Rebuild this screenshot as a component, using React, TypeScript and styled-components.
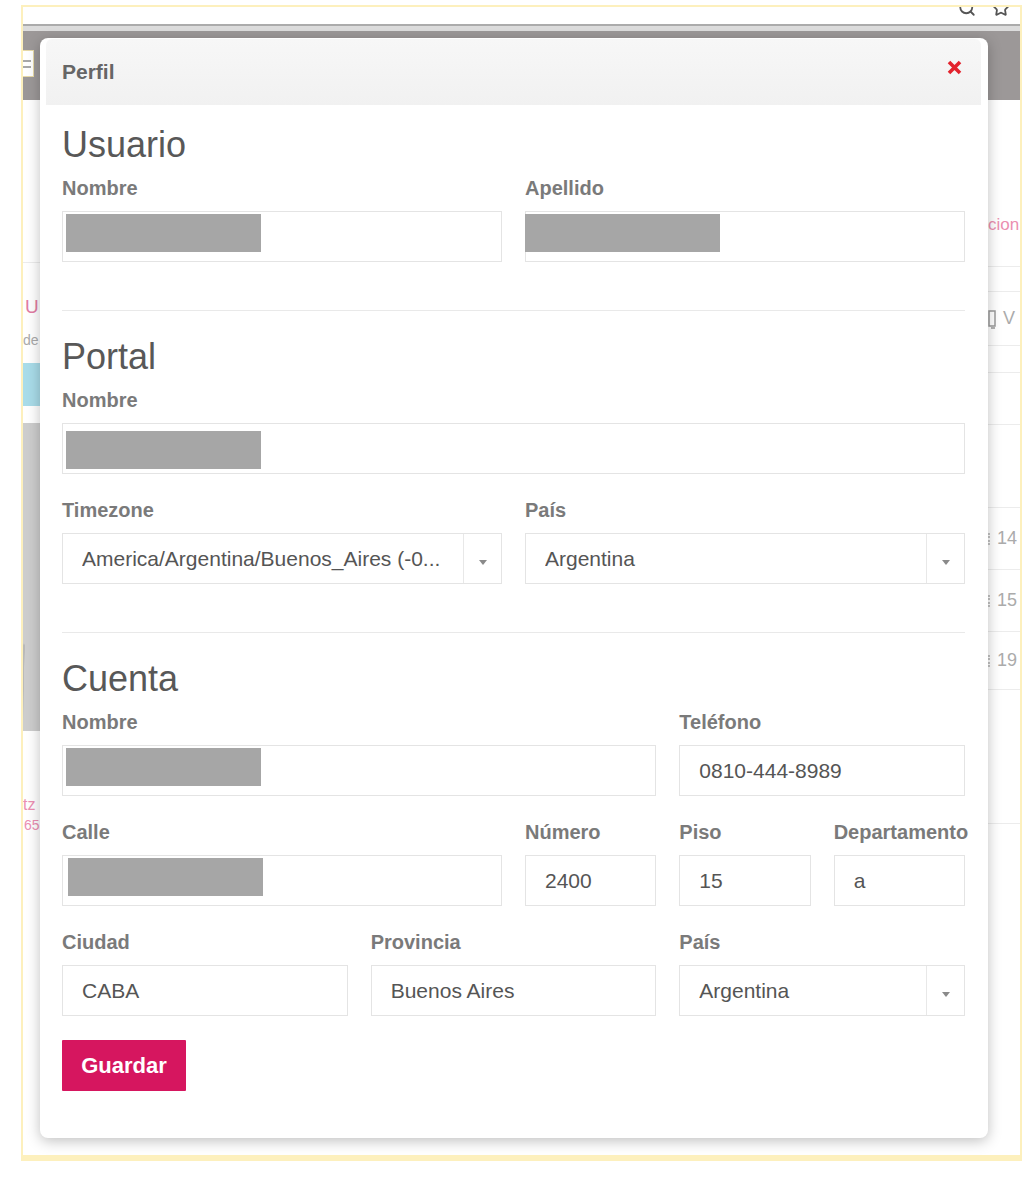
import React from "react";
import styled, { createGlobalStyle } from "styled-components";
import { Search, Star } from "lucide-react";

const GlobalStyle = createGlobalStyle`
  html, body {
    margin: 0;
    padding: 0;
    background: #fff;
  }
  body {
    font-family: "Liberation Sans", Arial, sans-serif;
  }
  * {
    box-sizing: border-box;
  }
`;

// ---- screenshot frame and the page behind the modal ----

const Screen = styled.div`
  width: 1028px;
  height: 1196px;
  padding: 5px 0 0 21px;
  background: #fff;
`;

const Frame = styled.div`
  position: relative;
  width: 1001px;
  height: 1156px;
  border: 2px solid #fdf0bd;
  border-bottom-width: 6px;
  overflow: hidden;
  display: flex;
  flex-direction: column;
  background: #fff;
`;

const BrowserStrip = styled.div`
  height: 17px;
  display: flex;
  justify-content: flex-end;
  align-items: flex-start;
  gap: 16px;
  padding-right: 10px;
  overflow: hidden;
  color: #555;

  svg {
    margin-top: -8px;
  }
`;

const ToolbarEdge = styled.div`
  height: 7px;
  border-top: 2px solid #ababab;
  background: #dcdcdc;
`;

const HeaderBar = styled.div`
  height: 69px;
  background: #9c9898;
  display: flex;
  align-items: flex-start;
`;

const MenuStub = styled.div`
  width: 11px;
  height: 27px;
  margin-top: 19px;
  background: #fff;
  border: 1px solid #e6d9a8;
  border-left: none;
  display: flex;
  flex-direction: column;
  justify-content: center;
  gap: 4px;

  &::before,
  &::after {
    content: "";
    height: 2px;
    margin-right: 2px;
    background: #a8a8a8;
  }
`;

const PageBody = styled.div`
  flex: 1;
  display: flex;
`;

const LeftColumn = styled.div`
  width: 17px;
  overflow: hidden;
  display: flex;
  flex-direction: column;
  background: #fff;
`;

const LeftBlank = styled.div`
  height: 163px;
  border-bottom: 1px solid #ececec;
`;

const EdgeText = styled.div<{ $color: string; $size: number; $mt: number; $indent?: number }>`
  margin-top: ${(p) => p.$mt}px;
  line-height: 20px;
  font-size: ${(p) => p.$size}px;
  color: ${(p) => p.$color};
  white-space: nowrap;
  padding-left: ${(p) => p.$indent ?? 0}px;
`;

const InfoStripe = styled.div`
  margin-top: 13px;
  height: 43px;
  background: #a9dce9;
`;

const AvatarBlock = styled.div`
  margin-top: 17px;
  height: 308px;
  background:
    radial-gradient(circle at 160% 30%, #cdcdcd 0 60%, transparent 61%),
    radial-gradient(ellipse at 190% 108%, #cdcdcd 0 70%, transparent 71%),
    #b9b9b9;
`;

const Spacer = styled.div`
  flex: 1;
`;

const RightColumn = styled.div`
  width: 32px;
  overflow: hidden;
  display: flex;
  flex-direction: column;
  background: #fff;
`;

const ListRow = styled.div<{ $h: number; $line?: boolean }>`
  height: ${(p) => p.$h}px;
  flex-shrink: 0;
  display: flex;
  align-items: center;
  gap: 6px;
  border-bottom: ${(p) => (p.$line ? "1px solid #ececec" : "none")};
  font-size: 18px;
  color: #ababab;
  white-space: nowrap;
`;

const PinkLink = styled.span`
  color: #eb8fb0;
  font-size: 17px;
  align-self: flex-start;
  padding-top: 10px;
`;

const CutGlyph = styled.span`
  width: 3px;
  height: 12px;
  border-left: 2px dotted #c4c4c4;
`;

// ---- modal ----

const Modal = styled.div`
  position: absolute;
  left: 17px;
  top: 31px;
  width: 948px;
  background: #fff;
  border-radius: 8px;
  box-shadow: 0 3px 14px rgba(0, 0, 0, 0.25);
  padding: 1px 7px 0 6px;
`;

const ModalHeader = styled.div`
  height: 66px;
  display: flex;
  align-items: center;
  justify-content: space-between;
  padding: 0 19px 0 16px;
  background: linear-gradient(#f7f7f7, #f1f1f1);
  border-radius: 6px 6px 0 0;
`;

const ModalTitle = styled.h4`
  margin: 0;
  font-size: 21px;
  font-weight: 700;
  color: #666;
`;

const CloseButton = styled.button`
  border: none;
  background: none;
  padding: 0;
  margin-bottom: 9px;
  display: flex;
  cursor: pointer;
`;

const ModalBody = styled.div`
  padding: 21px 16px 47px;
`;

const SectionTitle = styled.h3`
  margin: 0 0 12px;
  font-size: 36px;
  line-height: 38px;
  font-weight: 400;
  color: #585858;
`;

const Divider = styled.hr`
  border: 0;
  border-top: 1px solid #e9e9e9;
  margin: 48px 0 27px;
`;

const FormGrid = styled.div`
  display: grid;
  grid-template-columns: repeat(12, 1fr);
  column-gap: 23px;
  row-gap: 24px;
`;

const Field = styled.div<{ $span: number }>`
  grid-column: span ${(p) => p.$span};
  min-width: 0;
`;

const Label = styled.label`
  display: block;
  margin-bottom: 11px;
  font-size: 20px;
  line-height: 24px;
  font-weight: 700;
  color: #7a7a7a;
  white-space: nowrap;
`;

const InputBox = styled.div<{ $pad?: number }>`
  height: 51px;
  display: flex;
  align-items: center;
  padding-left: ${(p) => p.$pad ?? 19}px;
  border: 1px solid #e4e4e4;
  background: #fff;
  font-size: 21px;
  color: #555;
  white-space: nowrap;
`;

const Redacted = styled.div<{ $top?: number; $left?: number }>`
  align-self: flex-start;
  margin-top: ${(p) => p.$top ?? 2}px;
  margin-left: ${(p) => p.$left ?? 0}px;
  width: 195px;
  height: 38px;
  background: #a6a6a6;
`;

const SelectValue = styled.span`
  flex: 1;
  overflow: hidden;
`;

const SelectArrow = styled.span`
  width: 38px;
  align-self: stretch;
  display: flex;
  align-items: center;
  justify-content: center;
  padding-top: 8px;
  border-left: 1px solid #e8e8e8;

  &::after {
    content: "";
    border-left: 4px solid transparent;
    border-right: 4px solid transparent;
    border-top: 5px solid #8a8a8a;
  }
`;

const SaveButton = styled.button`
  display: block;
  margin-top: 24px;
  width: 124px;
  height: 51px;
  border: none;
  border-radius: 1px;
  background: #d6165f;
  color: #fff;
  font-family: "Liberation Sans", Arial, sans-serif;
  font-size: 22px;
  font-weight: 700;
  cursor: pointer;
`;

function TextInput({ span, label, value }: { span: number; label: string; value: string }) {
  return (
    <Field $span={span}>
      <Label>{label}</Label>
      <InputBox>{value}</InputBox>
    </Field>
  );
}

function HiddenInput({
  span,
  label,
  pad = 3,
  top,
  left,
}: {
  span: number;
  label: string;
  pad?: number;
  top?: number;
  left?: number;
}) {
  return (
    <Field $span={span}>
      <Label>{label}</Label>
      <InputBox $pad={pad}>
        <Redacted $top={top} $left={left} />
      </InputBox>
    </Field>
  );
}

function SelectInput({ span, label, value }: { span: number; label: string; value: string }) {
  return (
    <Field $span={span}>
      <Label>{label}</Label>
      <InputBox>
        <SelectValue>{value}</SelectValue>
        <SelectArrow />
      </InputBox>
    </Field>
  );
}

function CloseIcon() {
  return (
    <svg width="15" height="15" viewBox="0 0 15 15">
      <path d="M2 2 L13 13 M13 2 L2 13" stroke="#e3232d" strokeWidth="3.6" />
    </svg>
  );
}

function NoteIcon() {
  return (
    <svg width="9" height="20" viewBox="0 0 9 20">
      <rect x="1" y="2" width="6" height="15" fill="none" stroke="#9a9a9a" strokeWidth="1.5" />
      <path d="M3 19 H7" stroke="#9a9a9a" strokeWidth="1.5" />
    </svg>
  );
}

function BackgroundPage() {
  return (
    <>
      <BrowserStrip>
        <Search size={18} strokeWidth={2.4} />
        <Star size={18} strokeWidth={2.4} />
      </BrowserStrip>
      <ToolbarEdge />
      <HeaderBar>
        <MenuStub />
      </HeaderBar>
      <PageBody>
        <LeftColumn>
          <LeftBlank />
          <EdgeText $color="#e27ca3" $size={19} $mt={34} $indent={2}>
            U
          </EdgeText>
          <EdgeText $color="#aaa" $size={14} $mt={13}>
            de
          </EdgeText>
          <InfoStripe />
          <AvatarBlock />
          <EdgeText $color="#ec8fb2" $size={16} $mt={64}>
            tz
          </EdgeText>
          <EdgeText $color="#ec8fb2" $size={14} $mt={0} $indent={1}>
            65
          </EdgeText>
        </LeftColumn>
        <Spacer />
        <RightColumn>
          <ListRow $h={105} />
          <ListRow $h={62} $line>
            <PinkLink>cion</PinkLink>
          </ListRow>
          <ListRow $h={25} $line />
          <ListRow $h={54} $line>
            <NoteIcon />V
          </ListRow>
          <ListRow $h={27} $line />
          <ListRow $h={52} $line />
          <ListRow $h={83} $line />
          <ListRow $h={62} $line>
            <CutGlyph />
            14
          </ListRow>
          <ListRow $h={62} $line>
            <CutGlyph />
            15
          </ListRow>
          <ListRow $h={58} $line>
            <CutGlyph />
            19
          </ListRow>
          <ListRow $h={134} $line />
        </RightColumn>
      </PageBody>
    </>
  );
}

export default function App() {
  return (
    <Screen>
      <GlobalStyle />
      <Frame>
        <BackgroundPage />
        <Modal>
          <ModalHeader>
            <ModalTitle>Perfil</ModalTitle>
            <CloseButton aria-label="Cerrar">
              <CloseIcon />
            </CloseButton>
          </ModalHeader>
          <ModalBody>
            <SectionTitle>Usuario</SectionTitle>
            <FormGrid>
              <HiddenInput span={6} label="Nombre" />
              <HiddenInput span={6} label="Apellido" pad={0} left={-1} />
            </FormGrid>

            <Divider />

            <SectionTitle>Portal</SectionTitle>
            <FormGrid>
              <HiddenInput span={12} label="Nombre" top={7} />
              <SelectInput span={6} label="Timezone" value="America/Argentina/Buenos_Aires (-0..." />
              <SelectInput span={6} label="País" value="Argentina" />
            </FormGrid>

            <Divider />

            <SectionTitle>Cuenta</SectionTitle>
            <FormGrid>
              <HiddenInput span={8} label="Nombre" />
              <TextInput span={4} label="Teléfono" value="0810-444-8989" />
              <HiddenInput span={6} label="Calle" pad={5} />
              <TextInput span={2} label="Número" value="2400" />
              <TextInput span={2} label="Piso" value="15" />
              <TextInput span={2} label="Departamento" value="a" />
              <TextInput span={4} label="Ciudad" value="CABA" />
              <TextInput span={4} label="Provincia" value="Buenos Aires" />
              <SelectInput span={4} label="País" value="Argentina" />
            </FormGrid>

            <SaveButton>Guardar</SaveButton>
          </ModalBody>
        </Modal>
      </Frame>
    </Screen>
  );
}
